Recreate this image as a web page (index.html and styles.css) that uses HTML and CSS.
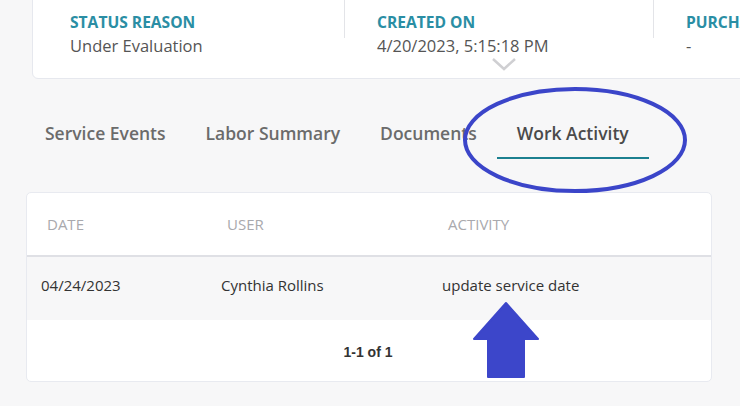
FILE: index.html
```html
<!DOCTYPE html>
<html lang="en">
<head>
  <meta charset="UTF-8">
  <title>Work Activity</title>
  <link rel="stylesheet" href="styles.css">
</head>
<body>
<div class="page">

  <!-- summary fields of the work order -->
  <div class="summary">
    <div class="field field-first">
      <div class="label">STATUS REASON</div>
      <div class="value">Under Evaluation</div>
    </div>
    <div class="sep"></div>
    <div class="field field-mid">
      <div class="label">CREATED ON</div>
      <div class="value">4/20/2023, 5:15:18 PM</div>
      <svg class="chevron" width="26" height="14" viewBox="0 0 26 14">
        <polyline points="2,2 13,12 24,2" fill="none" stroke="#cfcfd2" stroke-width="2.5"/>
      </svg>
    </div>
    <div class="sep"></div>
    <div class="field">
      <div class="label">PURCHA</div>
      <div class="value">-</div>
    </div>
  </div>

  <div class="tabs">
    <div class="tab">Service Events</div>
    <div class="tab">Labor Summary</div>
    <div class="tab">Documents</div>
    <div class="tab active">Work Activity</div>
  </div>

  <div class="table-card">
    <div class="row head">
      <div class="col-date">DATE</div>
      <div class="col-user">USER</div>
      <div class="col-act">ACTIVITY</div>
    </div>
    <div class="row item">
      <div class="col-date">04/24/2023</div>
      <div class="col-user">Cynthia Rollins</div>
      <div class="col-act">update service date</div>
    </div>
    <div class="pager">1-1 of 1</div>
  </div>

  <!-- markup drawn on top -->
  <svg class="mark-ring" width="240" height="120" viewBox="0 0 240 120">
    <ellipse cx="120" cy="57" rx="110" ry="51" fill="none" stroke="#3b45c9" stroke-width="4"/>
  </svg>
  <svg class="mark-arrow" width="72" height="80" viewBox="0 0 72 80">
    <path d="M36 2 L68 38 L54 38 L54 76 L18 76 L18 38 L4 38 Z" fill="#3c46ca" stroke="#3c46ca" stroke-width="2" stroke-linejoin="round"/>
  </svg>
</div>
</body>
</html>
```

FILE: styles.css
```css
body {
  margin: 0;
  background: #f7f7f8;
  font-family: "Open Sans", sans-serif;
  overflow: hidden;
}

.page {
  position: relative;
  display: flow-root;
  height: 406px;
  overflow: hidden;
}

.summary {
  display: flex;
  margin: -12px 0 0 32px;
  width: 800px;
  height: 91px;
  background: white;
  border: 1px solid #e6e8ee;
  border-radius: 6px;
  box-sizing: border-box;
}

.field {
  padding: 22px 0 0 32px;
  position: relative;
}

.field-first {
  width: 274px;
  padding-left: 37px;
}

.field-mid {
  width: 276px;
}

.sep {
  width: 1px;
  height: 49px;
  background: #e3e4e8;
}

.label {
  font-size: 15.6px;
  font-weight: 700;
  color: #2a8ea4;
  line-height: 22px;
}

.value {
  font-size: 16.5px;
  color: #555;
  line-height: 26px;
}

.chevron {
  position: absolute;
  left: 146px;
  top: 68px;
}

.tabs {
  display: flex;
  margin: 30px 0 0 25px;
}

.tab {
  padding: 12px 20px 0;
  font-size: 17.5px;
  font-weight: 600;
  color: #6b6b6b;
  line-height: 24px;
  height: 50px;
  box-sizing: border-box;
}

.tab.active {
  color: #4a4a4a;
  border-bottom: 2px solid #1c8090;
}

.table-card {
  margin: 33px 0 0 26px;
  width: 686px;
  height: 190px;
  background: white;
  border: 1px solid #e8eaf0;
  border-radius: 5px;
  box-sizing: border-box;
}

.row {
  display: flex;
  align-items: center;
  font-size: 15px;
}

.head {
  height: 62px;
  padding-left: 20px;
  color: #a9a9ad;
  border-bottom: 2px solid #dfe0e5;
}

.item {
  height: 63px;
  padding: 0 0 8px 14px;
  box-sizing: border-box;
  background: #f7f7f8;
  color: #333;
}

.col-date { width: 180px; }
.col-user { width: 221px; }

.pager {
  text-align: center;
  font-family: "Liberation Sans", Arial, sans-serif;
  font-weight: 700;
  font-size: 14px;
  color: #333;
  line-height: 64px;
  padding-right: 2px;
}

.mark-ring {
  position: absolute;
  left: 455px;
  top: 83px;
}

.mark-arrow {
  position: absolute;
  left: 470px;
  top: 301px;
}
```
